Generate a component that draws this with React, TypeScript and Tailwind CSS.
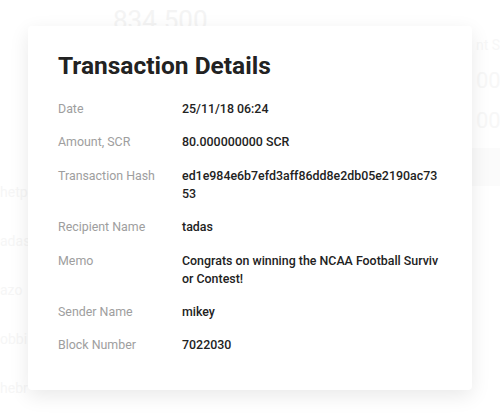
import React from "react";

const rows: { label: string; value: string }[] = [
  { label: "Date", value: "25/11/18 06:24" },
  { label: "Amount, SCR", value: "80.000000000 SCR" },
  { label: "Transaction Hash", value: "ed1e984e6b7efd3aff86dd8e2db05e2190ac7353" },
  { label: "Recipient Name", value: "tadas" },
  { label: "Memo", value: "Congrats on winning the NCAA Football Survivor Contest!" },
  { label: "Sender Name", value: "mikey" },
  { label: "Block Number", value: "7022030" },
];

export default function App() {
  return (
    <div
      className="relative w-[500px] h-[415px] overflow-hidden bg-white"
      style={{ fontFamily: "Roboto, 'Noto Sans', sans-serif" }}
    >
      {/* faint background page behind the overlay */}
      <div className="absolute inset-0 pointer-events-none">
        <div className="absolute left-[113px] top-[4px] text-[26px] leading-[32px] text-[#f4f4f4]">
          834.500
        </div>
        <div className="absolute left-[476px] top-[36px] flex flex-col gap-[14px] text-[#f7f7f7]">
          <div className="text-[14px] leading-[18px]">nt S</div>
          <div className="text-[22px] leading-[26px]">00</div>
          <div className="text-[22px] leading-[26px]">000</div>
        </div>
        <div className="absolute left-[472px] top-[148px] w-[28px] h-[38px] bg-[#fbfbfb]" />
        <div className="absolute left-0 top-[184px] flex flex-col gap-[33px] text-[14px] leading-[16px] text-[#f6f6f6]">
          <div>hetp</div>
          <div>adas</div>
          <div>azo</div>
          <div>obbi</div>
          <div>hebr</div>
        </div>
      </div>

      <div className="relative pt-[26px] px-[28px]">
        <div className="h-[364px] rounded-[4px] bg-white shadow-[0_6px_20px_rgba(0,0,0,0.09)] pl-[30px] pr-[32px] pt-[25px]">
          <h1 className="text-[24.5px] leading-[30px] font-bold text-[#222222]">
            Transaction Details
          </h1>
          <div className="mt-[19px] flex flex-col gap-[15.4px]">
            {rows.map((r) => (
              <div key={r.label} className="flex text-[12.4px] leading-[18px]">
                <div className="w-[124px] shrink-0 text-[#9e9e9e]">{r.label}</div>
                <div className="flex-1 font-medium text-[#222222] break-all">{r.value}</div>
              </div>
            ))}
          </div>
        </div>
      </div>
    </div>
  );
}
